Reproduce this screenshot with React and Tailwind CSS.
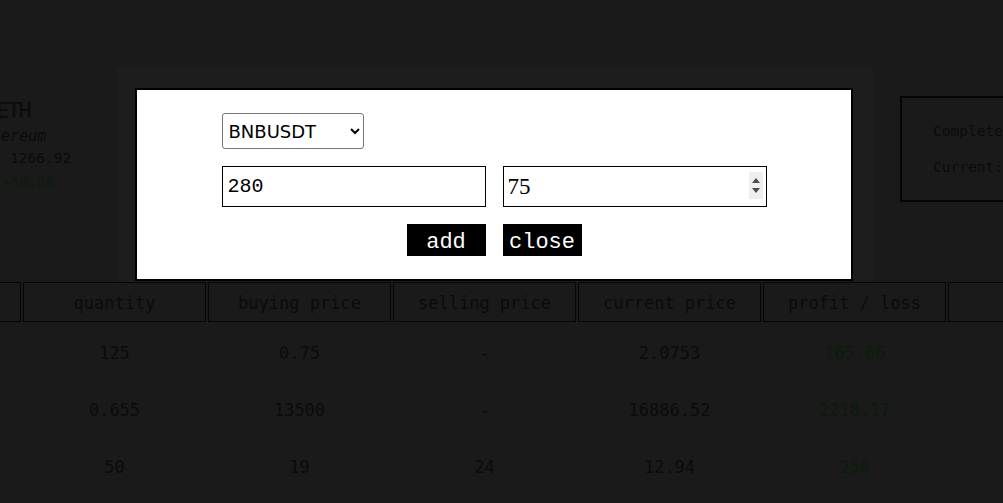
import React from "react";

const mono = { fontFamily: '"DejaVu Sans Mono", "Liberation Mono", monospace' };

const rows = [
  ["XRPUSDT", "125", "0.75", "-", "2.0753", "165.66"],
  ["BTCUSDT", "0.655", "13500", "-", "16886.52", "2218.17"],
  ["SOLUSDT", "50", "19", "24", "12.94", "250"],
];

const headers = ["coin", "quantity", "buying price", "selling price", "current price", "profit / loss", ""];

function Spinner() {
  return (
    <div className="absolute right-[4px] top-[6px] w-[14px] h-[27px] bg-[#efefef] flex flex-col items-center justify-center gap-[5px]">
      <svg width="8" height="5" viewBox="0 0 8 5"><path d="M4 0 L8 5 L0 5 Z" fill="#4d4d4d" /></svg>
      <svg width="8" height="5" viewBox="0 0 8 5"><path d="M0 0 L8 0 L4 5 Z" fill="#4d4d4d" /></svg>
    </div>
  );
}

export default function App() {
  return (
    <div className="w-screen h-screen overflow-hidden bg-[#1a1a1a] text-[#0b0b0b]" style={mono}>
      {/* page (dimmed under modal) */}
      <div className="flex h-[280px] ml-[-40px]">
        <div className="w-[157px] shrink-0 flex flex-col pt-[97px]">
          <div className="pl-[36px] text-[22px] leading-[28px] tracking-[-2px]">ETH</div>
          <div className="pl-[14px] text-[15px] leading-[22px] italic">ethereum</div>
          <div className="pl-[50px] text-[14.5px] leading-[23px]">1266.92</div>
          <div className="pl-[42px] text-[14.5px] leading-[24px] text-[#0c1c0c]">+50.56</div>
        </div>
        <div className="w-[756px] shrink-0 mt-[68px] h-[214px] bg-[#1d1d1d]" />
        <div className="ml-[27px] mt-[96px] h-[106px] w-[220px] shrink-0 border-2 border-[#050505] pl-[31px] pt-[21px] text-[14.5px]">
          <div className="leading-[24px]">Completed: 4</div>
          <div className="leading-[24px] mt-[12px]">Current: 3</div>
        </div>
      </div>

      <table className="ml-[-164px] w-[1297px] min-w-[1297px] table-fixed border-separate border-spacing-[2px] text-[17px]">
        <thead>
          <tr>
            {headers.map((h, i) => (
              <th key={i} className="w-[183px] h-[40px] pt-[4px] border border-[#060606] font-normal text-center">
                {h}
              </th>
            ))}
          </tr>
        </thead>
        <tbody>
          {rows.map((r, i) => (
            <tr key={i}>
              {r.map((c, j) => (
                <td key={j} className={`h-[55px] pt-[4px] text-center ${j === 5 ? "text-[#0c1c0c]" : ""}`}>
                  {c}
                </td>
              ))}
              <td className="h-[55px]" />
            </tr>
          ))}
        </tbody>
      </table>

      {/* modal */}
      <div className="fixed left-[135px] top-[88px] w-[718px] h-[193px] bg-white border-2 border-black flex flex-col items-center pt-[23px] text-black">
        <div className="w-[545px] flex flex-col">
          <select
            defaultValue="BNBUSDT"
            className="w-[142px] h-[36px] border border-[#767676] rounded-[3px] pl-[2px] text-[18px] bg-white"
            style={{ fontFamily: '"DejaVu Sans", sans-serif' }}
          >
            <option>BNBUSDT</option>
            <option>BTCUSDT</option>
            <option>ETHUSDT</option>
          </select>
          <div className="flex gap-[17px] mt-[17px]">
            <input
              type="text"
              defaultValue="280"
              className="w-[264px] h-[41px] border border-black pl-[5px] text-[20px] outline-none"
              style={{ fontFamily: '"Liberation Mono", monospace' }}
            />
            <div className="relative">
              <input
                type="text"
                defaultValue="75"
                className="w-[264px] h-[41px] border border-black pl-[4px] text-[23px] outline-none"
                style={{ fontFamily: '"Liberation Serif", serif' }}
              />
              <Spinner />
            </div>
          </div>
          <div className="flex justify-center gap-[17px] mt-[17px]">
            <button
              className="w-[79px] h-[32px] bg-black text-white text-[22px] leading-none pt-[5px]"
              style={{ fontFamily: '"Liberation Mono", monospace' }}
            >
              add
            </button>
            <button
              className="w-[79px] h-[32px] bg-black text-white text-[22px] leading-none pt-[5px]"
              style={{ fontFamily: '"Liberation Mono", monospace' }}
            >
              close
            </button>
          </div>
        </div>
      </div>
    </div>
  );
}
